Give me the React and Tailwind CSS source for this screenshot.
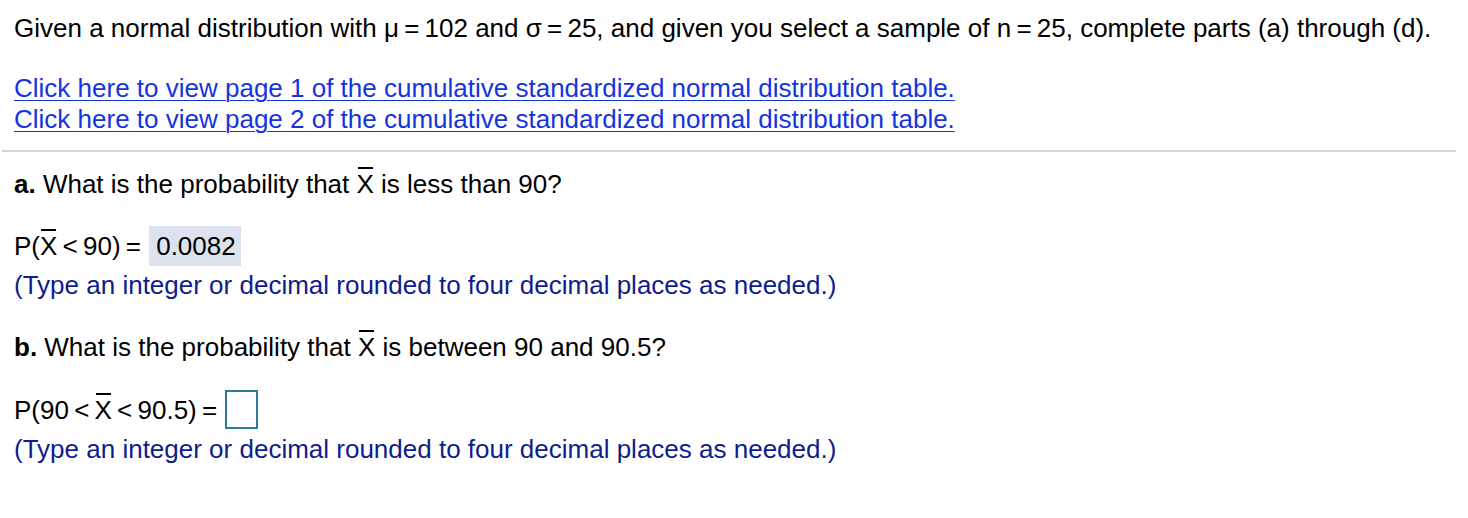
import React from "react";

function XBar() {
  return (
    <span className="relative inline-block">
      X
      <span className="absolute left-[1px] right-[1px] top-[-2px] h-[2px] bg-black" />
    </span>
  );
}

const T = "\u2009";

export default function App() {
  return (
    <div
      className="w-[1468px] h-[518px] bg-white text-black overflow-hidden"
      style={{ fontFamily: '"Liberation Sans", Arial, sans-serif' }}
    >
      <div className="pl-[14px] text-[26px] leading-[30px]">
        <div className="pt-[13px]">
          Given a normal distribution with μ{T}={T}102 and σ{T}={T}25, and given you select a sample of n{T}={T}25, complete parts (a) through (d).
        </div>
        <div className="mt-[30px] leading-[31px] text-[#1434e0]">
          <div>
            <a href="#" className="underline decoration-1 underline-offset-[3px]">
              Click here to view page 1 of the cumulative standardized normal distribution table.
            </a>
          </div>
          <div>
            <a href="#" className="underline decoration-1 underline-offset-[3px]">
              Click here to view page 2 of the cumulative standardized normal distribution table.
            </a>
          </div>
        </div>
      </div>
      <div className="mt-[15px] ml-[2px] w-[1454px] h-[2px] bg-[#d2d5e1]" />
      <div className="pl-[14px] text-[26px] leading-[30px]">
        <div className="mt-[17px]">
          <span className="font-bold">a.</span> What is the probability that <XBar /> is less than 90?
        </div>
        <div className="mt-[27px] flex items-center h-[40px]">
          <span>
            P(<XBar />{T}&lt;{T}90){T}={T}
          </span>
          <span className="ml-[3px] h-[40px] w-[92px] px-[7px] flex items-center bg-[#dce3ef]">0.0082</span>
        </div>
        <div className="text-[#0f1d8c] mt-[4px]">
          (Type an integer or decimal rounded to four decimal places as needed.)
        </div>
        <div className="mt-[32px]">
          <span className="font-bold">b.</span> What is the probability that <XBar /> is between 90 and 90.5?
        </div>
        <div className="mt-[28px] flex items-center h-[39px]">
          <span>
            P(90{T}&lt;{T}<XBar />{T}&lt;{T}90.5){T}={T}
          </span>
          <span className="ml-[3px] w-[33px] h-[39px] border-2 border-[#2e7a99]" />
        </div>
        <div className="text-[#0f1d8c] mt-[5px]">
          (Type an integer or decimal rounded to four decimal places as needed.)
        </div>
      </div>
    </div>
  );
}
